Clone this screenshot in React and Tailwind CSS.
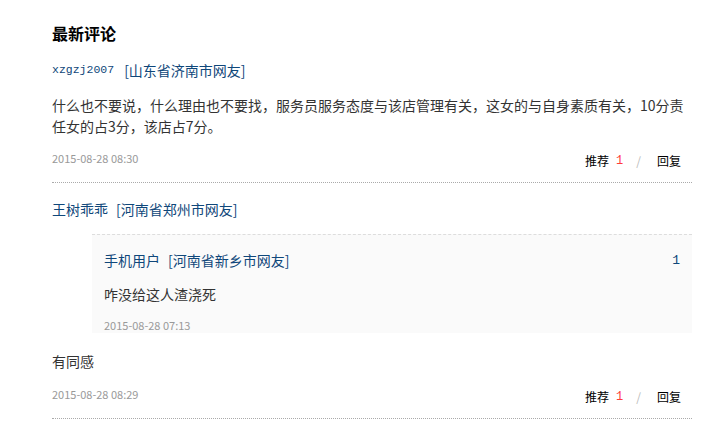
const cjk = { fontFamily: '"Noto Sans CJK SC", "Liberation Sans", sans-serif' }

function Actions() {
  return (
    <div className="flex items-center text-[12px] leading-[20px] text-black mt-[3px] mr-[11px]">
      <span>推荐</span>
      <span className="ml-[7px] text-[#ff3b3b] font-['Liberation_Mono',monospace]">1</span>
      <span className="ml-[13px] text-[#bbb]">/</span>
      <span className="ml-[16px]">回复</span>
    </div>
  )
}

export default function App() {
  return (
    <div className="bg-white w-[718px] h-[440px] overflow-hidden" style={cjk}>
      <div className="ml-[52px] w-[640px] pt-[21px]">
        <h2 className="text-[16px] leading-6 font-bold text-black">最新评论</h2>

        <div className="mt-[15px] flex items-center h-5 text-[14px] text-[#0f477a]">
          <span className="font-['Liberation_Mono',monospace] text-[11.5px] leading-none">xzgzj2007</span>
          <span className="ml-[10px] leading-5">[山东省济南市网友]</span>
        </div>
        <p className="mt-[15px] text-[14px] leading-[21px] text-[#333]">
          什么也不要说，什么理由也不要找，服务员服务态度与该店管理有关，这女的与自身素质有关，10分责任女的占3分，该店占7分。
        </p>
        <div className="mt-[11px] flex justify-between items-start">
          <span className="text-[11px] leading-5 text-[#999]">2015-08-28 08:30</span>
          <Actions />
        </div>
        <div className="mt-[11px] border-b border-dotted border-[#aaa]" />

        <div className="mt-[16px] flex items-center h-5 text-[14px] text-[#0f477a]">
          <span>王树乖乖</span>
          <span className="ml-[8px]">[河南省郑州市网友]</span>
        </div>
        <div className="mt-[15px] ml-[40px] border-t border-dashed border-[#ddd] bg-[#fafafa] pl-[12px] pr-[12px] pt-[15px]">
          <div className="flex justify-between items-center h-5 text-[14px] text-[#0f477a]">
            <div className="flex">
              <span>手机用户</span>
              <span className="ml-[8px]">[河南省新乡市网友]</span>
            </div>
            <span className="font-['Liberation_Mono',monospace] text-[13px] leading-none">1</span>
          </div>
          <p className="mt-[14px] text-[14px] leading-5 text-[#333]">咋没给这人渣浇死</p>
          <div className="mt-[13px] text-[11px] leading-4 text-[#999]">2015-08-28 07:13</div>
        </div>

        <p className="mt-[18px] text-[14px] leading-[21px] text-[#333]">有同感</p>
        <div className="mt-[12px] flex justify-between items-start">
          <span className="text-[11px] leading-5 text-[#999]">2015-08-28 08:29</span>
          <Actions />
        </div>
        <div className="mt-[11px] border-b border-dotted border-[#aaa]" />
      </div>
    </div>
  )
}
